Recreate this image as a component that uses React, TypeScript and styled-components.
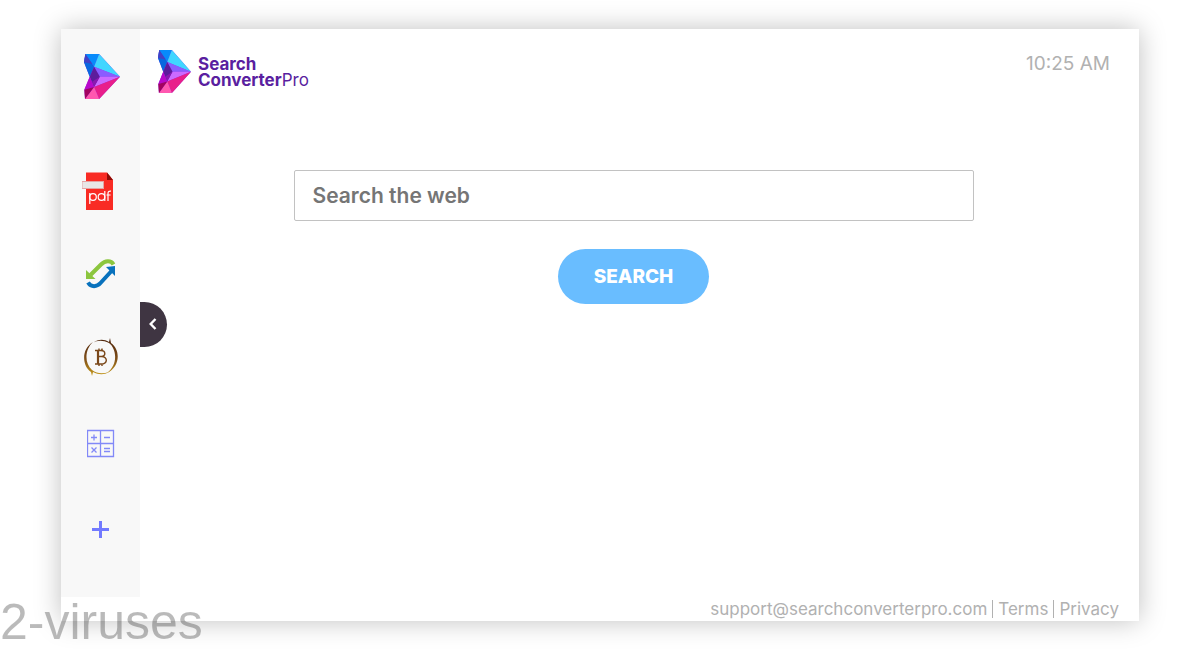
import React from 'react';
import styled, { createGlobalStyle } from 'styled-components';

const GlobalStyle = createGlobalStyle`
  *, *::before, *::after { box-sizing: border-box; }
  body {
    margin: 0;
    background: #fff;
    font-family: Inter, "Liberation Sans", sans-serif;
  }
`;

const Page = styled.div`
  position: relative;
  min-height: 100vh;
  padding: 29px 61px;
  display: flex;
`;

const Card = styled.div`
  flex: 1;
  display: flex;
  flex-direction: column;
  background: #fff;
  box-shadow: 0 0 25px rgba(0, 0, 0, 0.25);
`;

const Body = styled.div`
  flex: 1;
  display: flex;
`;

const Sidebar = styled.aside`
  position: relative;
  flex: none;
  width: 79px;
  padding-top: 25px;
  background: #f8f8f8;
  display: flex;
  flex-direction: column;
  align-items: center;
  gap: 73px;
`;

const Nav = styled.nav`
  display: flex;
  flex-direction: column;
  align-items: center;
  gap: 48px;
`;

const NavLink = styled.a`
  display: flex;
  svg { display: block; }
`;

const HomeLink = styled(NavLink)`
  padding-left: 2px;
`;

const CollapseButton = styled.button`
  position: absolute;
  left: 100%;
  top: 273px;
  width: 27px;
  height: 45px;
  padding: 0 2px 1px 0;
  border: 0;
  border-radius: 0 23px 23px 0;
  background: #3f3542;
  display: flex;
  align-items: center;
  justify-content: center;
`;

const Content = styled.div`
  flex: 1;
  min-width: 0;
`;

const Header = styled.header`
  display: flex;
  justify-content: space-between;
  align-items: flex-start;
  padding: 21px 29px 0 18px;
`;

const Brand = styled.a`
  display: flex;
  align-items: center;
  gap: 7px;
  color: #5a1fa0;
  text-decoration: none;
`;

const BrandName = styled.span`
  font-size: 17px;
  line-height: 16px;
  font-weight: 700;
`;

const BrandLight = styled.span`
  font-weight: 400;
`;

const Clock = styled.time`
  font-size: 19px;
  line-height: 28px;
  color: #b1b1b1;
`;

const SearchForm = styled.form`
  display: flex;
  flex-direction: column;
  align-items: center;
  gap: 28px;
  padding: 77px 12px 0 0;
`;

const SearchInput = styled.input`
  width: 100%;
  max-width: 680px;
  height: 51px;
  padding: 0 18px;
  border: 1px solid #c2c2c2;
  border-radius: 2px;
  font: 600 21px Inter, "Liberation Sans", sans-serif;
  color: #333;
  &::placeholder { color: #757575; opacity: 1; }
`;

const SearchButton = styled.button`
  height: 55px;
  width: 151px;
  padding: 0;
  border: 0;
  border-radius: 28px;
  background: #69bdff;
  color: #fff;
  font: 800 19px Inter, "Liberation Sans", sans-serif;
`;

const Footer = styled.footer`
  display: flex;
  justify-content: flex-end;
  padding: 3px 20px 3px 0;
`;

const FooterLink = styled.a`
  padding-left: 5px;
  font-size: 17px;
  line-height: 18px;
  color: #b1b1b1;
  text-decoration: none;
  & + & {
    margin-left: 5px;
    border-left: 1px solid #b1b1b1;
  }
`;

const Watermark = styled.div`
  position: absolute;
  left: 0;
  bottom: 0;
  font: 50px/56px "Liberation Sans", sans-serif;
  color: rgba(0, 0, 0, 0.27);
  pointer-events: none;
`;

const Gem = ({ width, height }: { width: number; height: number }) => (
  <svg width={width} height={height} viewBox="73 78 107 135" preserveAspectRatio="none" aria-hidden="true">
    <path d="M77 78H118L180 146L118 213H76L74 185L90 146L73 103Z" fill="#8b35e8" />
    <path d="M77 78H118L103 116Z" fill="#078bfb" />
    <path d="M118 78L180 146L103 116Z" fill="#40d6ff" />
    <path d="M77 78L103 116L90 146L73 103Z" fill="#0868df" />
    <path d="M77 78L98 108L73 103Z" fill="#4440c4" />
    <path d="M103 116L180 146H120Z" fill="#8a5cff" />
    <path d="M103 116L120 146L103 177L90 146Z" fill="#5c1c9c" />
    <path d="M120 146H180L103 177Z" fill="#cb6bff" />
    <path d="M120 146L103 177L97 161Z" fill="#8a18b0" />
    <path d="M90 146L103 177L74 185Z" fill="#b908ca" />
    <path d="M103 177L180 146L118 213Z" fill="#e81f8b" />
    <path d="M103 177L118 213H76Z" fill="#ff58b0" />
    <path d="M103 177L76 213L74 185Z" fill="#a3025f" />
  </svg>
);

const PdfIcon = () => (
  <svg width="38" height="38" viewBox="0 0 38 38" aria-hidden="true">
    <path d="M4 0.5H25L31 8V38H4Z" fill="#f92b24" />
    <path d="M25 0.5V8H31Z" fill="#8d0b07" />
    <rect x="0" y="9.5" width="21.5" height="7" fill="#e8e6e6" stroke="#e5a3a3" />
    <g fill="none" stroke="#fff" strokeWidth="1.2">
      <path d="M7.8 21V32" />
      <circle cx="11" cy="25" r="3.3" />
      <circle cx="19.5" cy="25" r="3.3" />
      <path d="M22.8 19V29M26 29V21.5Q26 18.8 29 19.2M24.5 23H28.6" />
    </g>
  </svg>
);

const ConvertIcon = () => (
  <svg width="30" height="32" viewBox="0 0 30 32" aria-hidden="true">
    <path d="M4.5 17L15 6.5C19 2.5 25 2 27.5 6.5" fill="none" stroke="#8cc63e" strokeWidth="4" />
    <path d="M0 12V21H9.5Z" fill="#8cc63e" />
    <path d="M2 24.5C5 29.5 11 29 14.5 25L25.5 13" fill="none" stroke="#0972bd" strokeWidth="4" />
    <path d="M20 9L29 8V18Z" fill="#0972bd" />
  </svg>
);

const BitcoinIcon = () => (
  <svg width="36" height="38" viewBox="0 0 36 38" aria-hidden="true">
    <defs>
      <linearGradient id="bronze" gradientUnits="userSpaceOnUse" x1="0" y1="0" x2="0" y2="38">
        <stop offset="0" stopColor="#4b2109" />
        <stop offset="0.55" stopColor="#80501a" />
        <stop offset="1" stopColor="#c79a18" />
      </linearGradient>
    </defs>
    <path d="M26 4L27 0L28 5C38 12 37 29 24 35C35 27 34 11 26 5C20 2 14 2 10 5C15 1 21 1 26 4Z" fill="url(#bronze)" />
    <path d="M10 4C-2 11 -1 28 8 34L9 38L10 34C16 37 21 37 26 34C20 36 14 36 9 32C1 25 2 11 10 4Z" fill="url(#bronze)" />
    <path d="M12 12.5H18C23 12.5 23 18.5 18.5 18.5C25 18.5 25 26 18 26H12M16 18.5H19M16 10.5V12.5M19 10.5V12.5M16 26V28M19 26V28" fill="none" stroke="#7a4719" strokeWidth="1.4" />
    <path d="M15 12.5V26" stroke="#7a4719" strokeWidth="2.2" />
  </svg>
);

const CalculatorIcon = () => (
  <svg width="28" height="38" viewBox="0 0 28 38" fill="none" stroke="#8289f8" aria-hidden="true">
    <path d="M.5 6.5H26.5V32.5H.5ZM13.5 6.5V32.5M.5 19.5H26.5" strokeWidth="1.3" />
    <path d="M4 13.5H10M7 10.5V16.5M17 13.5H23M4.5 23.5L9.5 28.5M9.5 23.5L4.5 28.5M17 24.5H23M17 27.5H23" strokeWidth="1.3" />
  </svg>
);

const PlusIcon = () => (
  <svg width="18" height="38" viewBox="0 0 18 38" aria-hidden="true">
    <path d="M0 19.5H17M8.5 11V28" stroke="#727aff" strokeWidth="3" />
  </svg>
);

const tools = [
  { label: 'PDF converter', Icon: PdfIcon },
  { label: 'File converter', Icon: ConvertIcon },
  { label: 'Crypto', Icon: BitcoinIcon },
  { label: 'Calculator', Icon: CalculatorIcon },
  { label: 'Add shortcut', Icon: PlusIcon },
];

export default function App() {
  return (
    <Page>
      <GlobalStyle />
      <Card>
        <Body>
          <Sidebar>
            <HomeLink href="#" aria-label="Home">
              <Gem width={36} height={45} />
            </HomeLink>
            <Nav aria-label="Tools">
              {tools.map(({ label, Icon }) => (
                <NavLink key={label} href="#" aria-label={label}>
                  <Icon />
                </NavLink>
              ))}
            </Nav>
            <CollapseButton type="button" aria-label="Collapse sidebar">
              <svg width="8" height="12" viewBox="0 0 8 12" aria-hidden="true">
                <path d="M6.5 1L1.7 6L6.5 11" fill="none" stroke="#fff" strokeWidth="2.4" />
              </svg>
            </CollapseButton>
          </Sidebar>
          <Content>
            <Header>
              <Brand href="#">
                <Gem width={33} height={43} />
                <BrandName>
                  Search
                  <br />
                  Converter<BrandLight>Pro</BrandLight>
                </BrandName>
              </Brand>
              <Clock>10:25 AM</Clock>
            </Header>
            <SearchForm onSubmit={(e) => e.preventDefault()}>
              <SearchInput type="text" placeholder="Search the web" aria-label="Search the web" />
              <SearchButton type="submit">SEARCH</SearchButton>
            </SearchForm>
          </Content>
        </Body>
        <Footer>
          <FooterLink href="mailto:support@searchconverterpro.com">support@searchconverterpro.com</FooterLink>
          <FooterLink href="#">Terms</FooterLink>
          <FooterLink href="#">Privacy</FooterLink>
        </Footer>
      </Card>
      <Watermark>2-viruses</Watermark>
    </Page>
  );
}
